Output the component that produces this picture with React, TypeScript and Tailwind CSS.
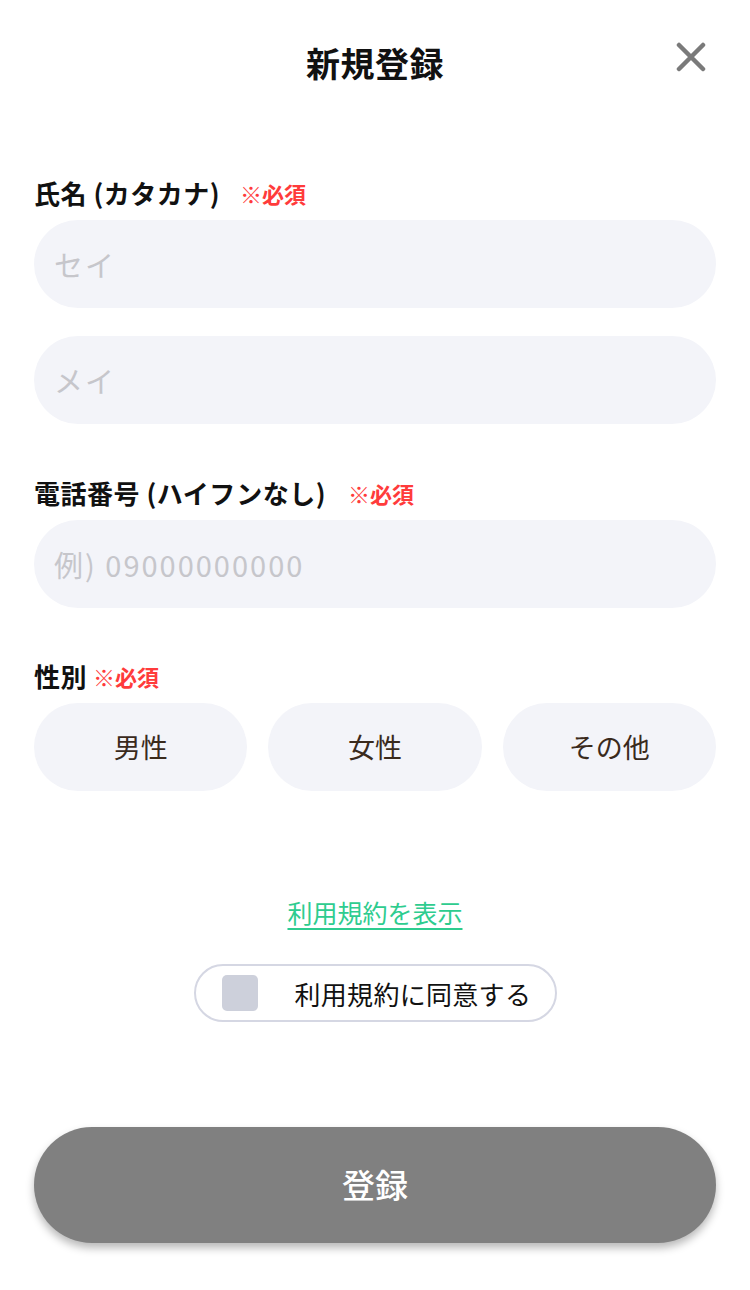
import React from 'react';

const font = { fontFamily: '"Noto Sans CJK JP", "Noto Sans", sans-serif' };

const Label: React.FC<{ text: string; gap: string }> = ({ text, gap }) => (
  <div className="flex items-center h-[32px] leading-[32px]">
    <span className="text-[26px] font-bold text-[#111111] tracking-[0.5px]">{text}</span>
    <span className={`${gap} text-[22px] font-bold text-[#ff3b3b]`}>※必須</span>
  </div>
);

const Field: React.FC<{ placeholder: string }> = ({ placeholder }) => (
  <input
    type="text"
    placeholder={placeholder}
    className="w-full h-[88px] rounded-full bg-[#f3f4f9] px-[20px] text-[29px] tracking-[2px] text-[#222] outline-none placeholder:text-[#c6c6cb]"
  />
);

export default function App() {
  return (
    <div className="w-[750px] h-[1290px] bg-white flex flex-col px-[34px]" style={font}>
      {/* Header */}
      <div className="relative h-[124px] flex items-center justify-center">
        <h1 className="text-[34px] font-bold text-[#111111] tracking-[0.5px]">新規登録</h1>
        <button className="absolute right-[10px] top-[42px] w-[30px] h-[30px]">
          <svg viewBox="0 0 30 30" className="w-[30px] h-[30px]">
            <path d="M3 3 L27 27 M27 3 L3 27" stroke="#7a7a7a" strokeWidth="4.5" strokeLinecap="round" />
          </svg>
        </button>
      </div>

      {/* Name */}
      <div className="mt-[53px]">
        <Label text="氏名 (カタカナ)" gap="ml-[20px]" />
      </div>
      <div className="mt-[11px]">
        <Field placeholder="セイ" />
      </div>
      <div className="mt-[28px]">
        <Field placeholder="メイ" />
      </div>

      {/* Phone */}
      <div className="mt-[53px]">
        <Label text="電話番号 (ハイフンなし)" gap="ml-[22px]" />
      </div>
      <div className="mt-[11px]">
        <Field placeholder="例) 09000000000" />
      </div>

      {/* Gender */}
      <div className="mt-[52px]">
        <Label text="性別" gap="ml-[6px]" />
      </div>
      <div className="mt-[11px] grid grid-cols-3 gap-[21px]">
        {['男性', '女性', 'その他'].map((g) => (
          <button
            key={g}
            className="h-[88px] rounded-full bg-[#f3f4f9] text-[27px] text-[#3a2a1c]"
          >
            {g}
          </button>
        ))}
      </div>

      {/* Terms link */}
      <div className="mt-[105px] h-[32px] flex justify-center">
        <a className="text-[25px] leading-[32px] text-[#2ecc8f] underline underline-offset-[5px]">
          利用規約を表示
        </a>
      </div>

      {/* Agree checkbox */}
      <div className="mt-[36px] mx-auto w-[363px] h-[58px] rounded-full border-2 border-[#d5d7e3] flex items-center pl-[26px]">
        <div className="w-[36px] h-[36px] rounded-[5px] bg-[#cdd0db]" />
        <span className="ml-[37px] text-[26px] tracking-[0.3px] text-[#111111]">利用規約に同意する</span>
      </div>

      {/* Submit */}
      <button className="mt-[105px] h-[116px] w-full rounded-full bg-[#808080] text-white text-[33px] font-medium shadow-[0_5px_8px_rgba(0,0,0,0.28)]">
        登録
      </button>
    </div>
  );
}
